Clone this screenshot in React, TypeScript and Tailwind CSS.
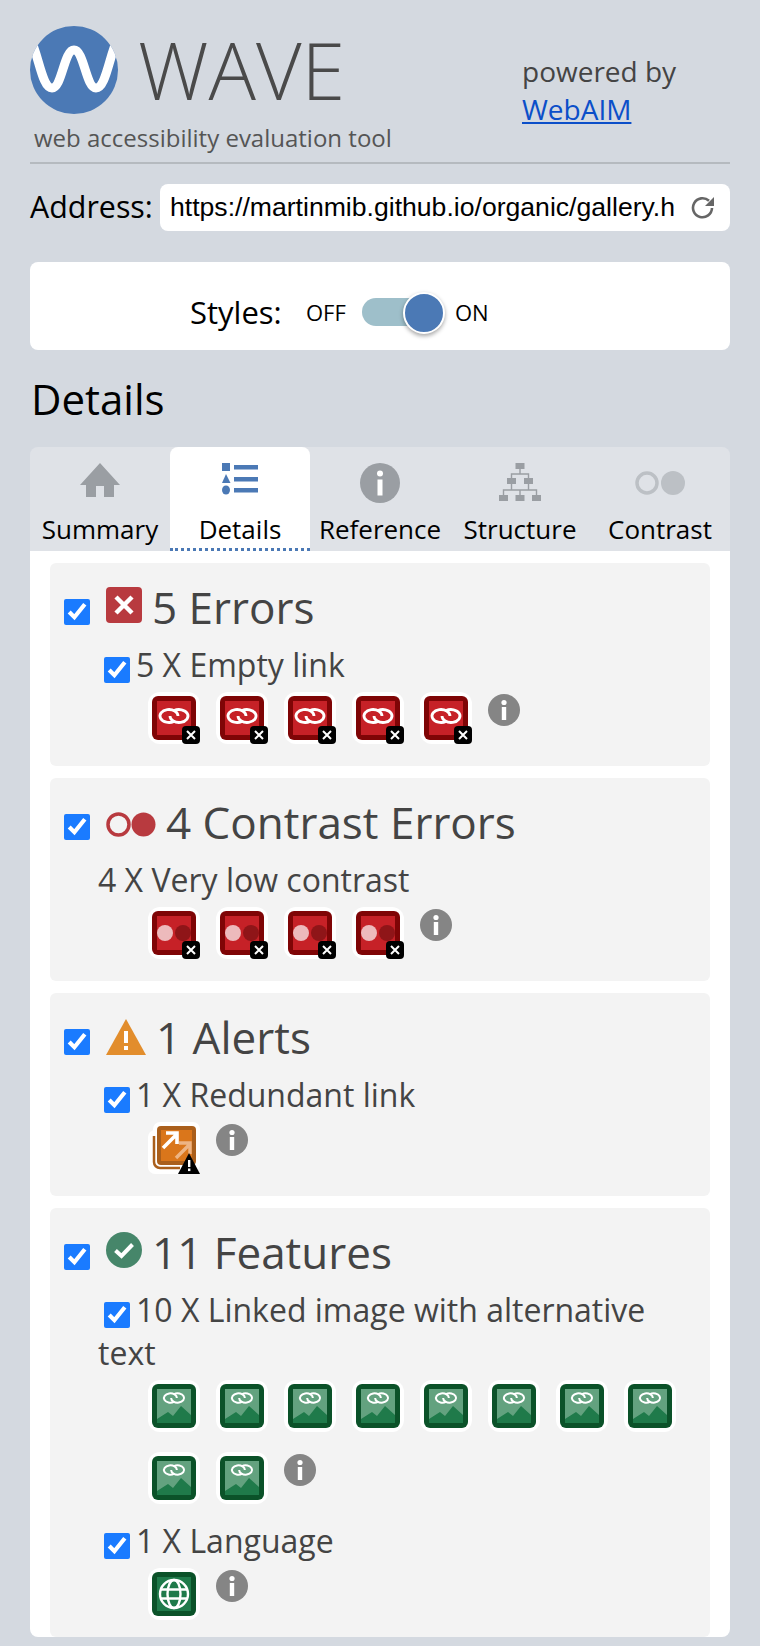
import React from 'react';

// Small building blocks for the results list
const Check: React.FC<{ className?: string }> = ({ className = '' }) => (
  <input type="checkbox" defaultChecked className={`w-[26px] h-[26px] m-0 accent-[#1a7bff] ${className}`} />
);

const Info = () => (
  <svg viewBox="0 0 32 32" className="w-8 h-8 mt-[2px] shrink-0">
    <circle cx="16" cy="16" r="16" fill="#858585" />
    <circle cx="16" cy="8.5" r="2.6" fill="#fff" />
    <rect x="13.8" y="13" width="4.4" height="13" fill="#fff" />
  </svg>
);

const Chain = ({ y = 20, w = 1 }: { y?: number; w?: number }) => (
  <g transform={`translate(22 ${y}) scale(${w})`} fill="none" stroke="#fff" strokeWidth="2.8">
    <path d="M4 0 A9 6.5 0 1 0 0 5.4" />
    <path d="M-4 0 A9 6.5 0 1 0 0 -5.4" />
  </g>
);

const Tile: React.FC<{ dark: string; light: string; children?: React.ReactNode }> = ({ dark, light, children }) => (
  <svg viewBox="0 0 44 44" className="block w-11 h-11">
    <rect width="44" height="44" rx="6" fill={dark} />
    <rect x="5" y="5" width="34" height="34" fill={light} />
    {children}
  </svg>
);

const Badge = () => (
  <span className="absolute right-0 bottom-0 w-[18px] h-[18px] rounded-[4px] bg-black flex items-center justify-center">
    <svg viewBox="0 0 10 10" className="w-[10px] h-[10px]">
      <path d="M1 1 L9 9 M9 1 L1 9" stroke="#fff" strokeWidth="2" />
    </svg>
  </span>
);

const Frame: React.FC<{ children: React.ReactNode }> = ({ children }) => (
  <span className="relative block w-[52px] h-[52px] rounded-[12px] bg-white p-1 shrink-0">{children}</span>
);

const EmptyLink = () => (
  <Frame>
    <Tile dark="#7f0506" light="#c62127">
      <Chain y={20} />
    </Tile>
    <Badge />
  </Frame>
);

const LowContrast = () => (
  <Frame>
    <Tile dark="#7f0506" light="#c62127">
      <circle cx="13" cy="22" r="8" fill="#edbabc" />
      <circle cx="31" cy="22" r="8" fill="#8f1518" />
    </Tile>
    <Badge />
  </Frame>
);

const RedundantLink = () => (
  <span className="relative block w-[52px] h-[52px] shrink-0">
    <svg viewBox="0 0 52 52" className="block w-[52px] h-[52px]">
      <rect x="5" y="0" width="47" height="49" rx="7" fill="#fff" />
      <rect x="0" y="8" width="42" height="44" rx="7" fill="#fff" />
      <path d="M6 14 V40 A6 6 0 0 0 12 46 H32" fill="none" stroke="#aa5f1c" strokeWidth="2.5" />
      <rect x="9" y="4" width="39" height="39" rx="4" fill="#aa5f1c" />
      <rect x="13" y="8" width="31" height="31" fill="#da761b" />
      <path d="M28 36 L41 23 M31 21 H42 V32" fill="none" stroke="#edb484" strokeWidth="3.4" />
      <path d="M15 26 L28 13 M18 11 H29 V22" fill="none" stroke="#fff" strokeWidth="3.6" />
      <path d="M41 31 L52 52 H30 Z" fill="#000" />
      <rect x="40" y="38" width="2.4" height="7" fill="#fff" />
      <rect x="40" y="46.5" width="2.4" height="2.6" fill="#fff" />
    </svg>
  </span>
);

const LinkedImage = () => (
  <Frame>
    <Tile dark="#0b5229" light="#63a27f">
      <path d="M5 39 V35 L16 28 L21 32 L29 22 L39 31 V39 Z" fill="#1f7a4a" />
      <Chain y={14} w={0.72} />
    </Tile>
  </Frame>
);

const Language = () => (
  <Frame>
    <Tile dark="#0b5229" light="#1f7a4a">
      <g fill="none" stroke="#fff" strokeWidth="2.4">
        <circle cx="22" cy="22" r="14" />
        <ellipse cx="22" cy="22" rx="6.5" ry="14" />
        <path d="M9 17.5 H35 M9 26.5 H35" />
      </g>
    </Tile>
  </Frame>
);

const tabs = [
  { label: 'Summary', icon: (
    <svg viewBox="0 0 40 34" className="w-10 h-[34px]">
      <path d="M20 0 L40 22 H34 V34 H24 V23 H16 V34 H6 V22 H0 Z" fill="#9a9ea3" />
    </svg>
  ) },
  { label: 'Details', active: true, icon: (
    <svg viewBox="0 0 36 32" className="w-9 h-8">
      <g fill="#4b79b5">
        <rect x="0" y="0" width="8" height="8" />
        <path d="M4 11 L8.5 20 H0 Z" />
        <ellipse cx="4" cy="27" rx="4" ry="4.5" />
        <rect x="12" y="2" width="24" height="4.5" />
        <rect x="12" y="14" width="24" height="4.5" />
        <rect x="12" y="25" width="24" height="4.5" />
      </g>
    </svg>
  ) },
  { label: 'Reference', icon: (
    <svg viewBox="0 0 40 40" className="w-10 h-10">
      <circle cx="20" cy="20" r="20" fill="#9a9ea3" />
      <circle cx="20" cy="10.5" r="3" fill="#fff" />
      <rect x="17.5" y="16.5" width="5" height="16" fill="#fff" />
    </svg>
  ) },
  { label: 'Structure', icon: (
    <svg viewBox="0 0 42 38" className="w-[42px] h-[38px]">
      <g fill="#9a9ea3">
        <rect x="16.5" y="0" width="9" height="6" />
        <rect x="8" y="15" width="9" height="6" />
        <rect x="25" y="15" width="9" height="6" />
        <rect x="0" y="32" width="9" height="6" />
        <rect x="16.5" y="32" width="9" height="6" />
        <rect x="33" y="32" width="9" height="6" />
      </g>
      <path d="M21 6 V11 M12.5 15 V11 H29.5 V15 M4.5 32 V27 H37.5 V32 M21 27 V32 M12.5 21 V27 M29.5 21 V27" fill="none" stroke="#9a9ea3" strokeWidth="1.4" />
    </svg>
  ) },
  { label: 'Contrast', icon: (
    <svg viewBox="0 0 50 24" className="w-[50px] h-6 mt-2">
      <circle cx="12" cy="12" r="10" fill="none" stroke="#bcc0c5" strokeWidth="3.5" />
      <circle cx="38" cy="12" r="12" fill="#bcc0c5" />
    </svg>
  ) },
];

const Panel: React.FC<{ title: string; icon: React.ReactNode; gap: string; children: React.ReactNode; className?: string }> = ({ title, icon, gap, children, className = '' }) => (
  <section className={`bg-[#f3f3f3] rounded-[6px] pl-[14px] pr-3 ${className}`}>
    <div className="flex items-center h-[80px] pt-2">
      <Check className="mt-[10px] mr-4" />
      {icon}
      <h3 className={`text-[44px] leading-[60px] text-[#444] ${gap}`}>{title}</h3>
    </div>
    {children}
  </section>
);

const Item: React.FC<{ text: string; check?: boolean; children: React.ReactNode }> = ({ text, check = true, children }) => (
  <div className="pl-[34px]">
    <p className="text-[32px] leading-[43px] text-[#444]">
      {check && <Check className="ml-[6px] mr-[6px] align-[-6px]" />}
      {text}
    </p>
    <div className="flex flex-wrap gap-x-4 gap-y-5 pl-[50px] pt-[6px]">{children}</div>
  </div>
);

export default function App() {
  return (
    <div className="min-h-screen bg-[#d4d9e0] px-[30px] pt-[26px] pb-[9px] font-['Open_Sans',sans-serif] text-black">
      <header className="flex h-[138px] border-b-2 border-[#b5babf]">
        <div className="w-[492px]">
          <div className="flex items-center h-[88px]">
            <svg viewBox="0 0 88 88" className="w-[88px] h-[88px] shrink-0">
              <clipPath id="logo-clip"><circle cx="44" cy="44" r="44" /></clipPath>
              <circle cx="44" cy="44" r="44" fill="#4b79b5" />
              <path clipPath="url(#logo-clip)" d="M0 12 C9 30 12 62 22 62 C32 62 34 24 44 24 C54 24 56 62 66 62 C76 62 79 30 88 12" fill="none" stroke="#fff" strokeWidth="9" />
            </svg>
            <h1 className="ml-5 text-[79px] leading-[88px] font-light text-[#4a4a4a]">WAVE</h1>
          </div>
          <p className="ml-1 mt-2 text-[24px] leading-[32px] text-[#555]">web accessibility evaluation tool</p>
        </div>
        <div className="pt-[26px] text-[28px] leading-[38px] text-[#444]">
          <p>powered by</p>
          <a href="#" className="text-[#0b4fc9] underline">WebAIM</a>
        </div>
      </header>

      <div className="flex items-center mt-5 h-[47px]">
        <label className="w-[130px] pb-[2px] text-[30.4px] leading-[40px]">Address:</label>
        <div className="flex-1 h-[47px] bg-white rounded-lg flex items-center pl-[10px] pr-[15px]">
          <input
            readOnly
            value="https://martinmib.github.io/organic/gallery.html"
            className="w-[505px] p-0 bg-transparent outline-none font-['Liberation_Sans',sans-serif] text-[26.6px]"
          />
          <svg viewBox="0 0 24 24" className="w-6 h-6 ml-auto">
            <path d="M21 12 A9.5 9.5 0 1 1 18 4.8" fill="none" stroke="#666" strokeWidth="2.6" />
            <path d="M23 1 V10 H14 Z" fill="#666" />
          </svg>
        </div>
      </div>

      <div className="mt-[31px] h-[88px] bg-white rounded-lg flex items-center pl-[160px] pt-3">
        <span className="text-[31px] leading-[40px] w-[116px]">Styles:</span>
        <span className="text-[22px] leading-7 w-[56px]">OFF</span>
        <span className="relative w-[83px] h-[40px] flex items-center">
          <span className="block w-[62px] h-7 rounded-full bg-[#9ebfca]" />
          <span className="absolute right-0 top-0 w-[42px] h-[42px] rounded-full bg-[#4b79b5] border-2 border-white shadow-[0_2px_4px_rgba(0,0,0,0.35)]" />
        </span>
        <span className="ml-[10px] text-[22px] leading-7">ON</span>
      </div>

      <h2 className="mt-[23px] text-[42px] leading-[52px] ml-[1px]">Details</h2>

      <div className="mt-[22px] rounded-t-lg overflow-hidden bg-[#dfe2e7] flex">
        {tabs.map(t => (
          <div key={t.label} className={`w-[140px] h-[104px] flex flex-col items-center pt-4 ${t.active ? 'bg-white rounded-t-lg border-b-[3px] border-dotted border-[#4b79b5]' : ''}`}>
            <div className="h-10 flex items-start">{t.icon}</div>
            <span className="mt-[9px] text-[26px] leading-[34px]">{t.label}</span>
          </div>
        ))}
      </div>

      <div className="bg-white rounded-b-lg px-5 pt-3 flex flex-col gap-3">
        <Panel
          title="5 Errors"
          gap="ml-[10px]"
          className="h-[203px]"
          icon={
            <svg viewBox="0 0 36 36" className="w-9 h-9 mb-1 shrink-0">
              <rect width="36" height="36" rx="4" fill="#b83a3f" />
              <path d="M10 10 L26 26 M26 10 L10 26" stroke="#fff" strokeWidth="4.5" />
            </svg>
          }
        >
          <Item text="5 X Empty link">
            <EmptyLink /><EmptyLink /><EmptyLink /><EmptyLink /><EmptyLink /><Info />
          </Item>
        </Panel>

        <Panel
          title="4 Contrast Errors"
          gap="ml-[10px]"
          className="h-[203px]"
          icon={
            <svg viewBox="0 0 50 25" className="w-[50px] h-[25px] mt-1 shrink-0">
              <circle cx="12.5" cy="12.5" r="10.5" fill="none" stroke="#b83a3f" strokeWidth="3.5" />
              <circle cx="37.5" cy="12.5" r="12" fill="#b83a3f" />
            </svg>
          }
        >
          <Item text="4 X Very low contrast" check={false}>
            <LowContrast /><LowContrast /><LowContrast /><LowContrast /><Info />
          </Item>
        </Panel>

        <Panel
          title="1 Alerts"
          gap="ml-[10px]"
          className="h-[203px]"
          icon={
            <svg viewBox="0 0 40 36" className="w-10 h-9 shrink-0">
              <path d="M20 0 L40 36 H0 Z" fill="#e28d2c" />
              <rect x="18" y="12" width="4" height="12" fill="#fff" />
              <rect x="18" y="27" width="4" height="4" fill="#fff" />
            </svg>
          }
        >
          <Item text="1 X Redundant link">
            <RedundantLink /><Info />
          </Item>
        </Panel>

        <Panel
          title="11 Features"
          gap="ml-[10px]"
          className="pb-[17px]"
          icon={
            <svg viewBox="0 0 36 36" className="w-9 h-9 mb-1 shrink-0">
              <circle cx="18" cy="18" r="18" fill="#46866a" />
              <path d="M9.5 18.5 L15.5 24 L26.5 12.5" fill="none" stroke="#fff" strokeWidth="4" />
            </svg>
          }
        >
          <Item text="10 X Linked image with alternative text">
            {Array.from({ length: 10 }).map((_, i) => <LinkedImage key={i} />)}
            <Info />
          </Item>
          <div className="mt-[15px]">
            <Item text="1 X Language">
              <Language /><Info />
            </Item>
          </div>
        </Panel>
      </div>
    </div>
  );
}
